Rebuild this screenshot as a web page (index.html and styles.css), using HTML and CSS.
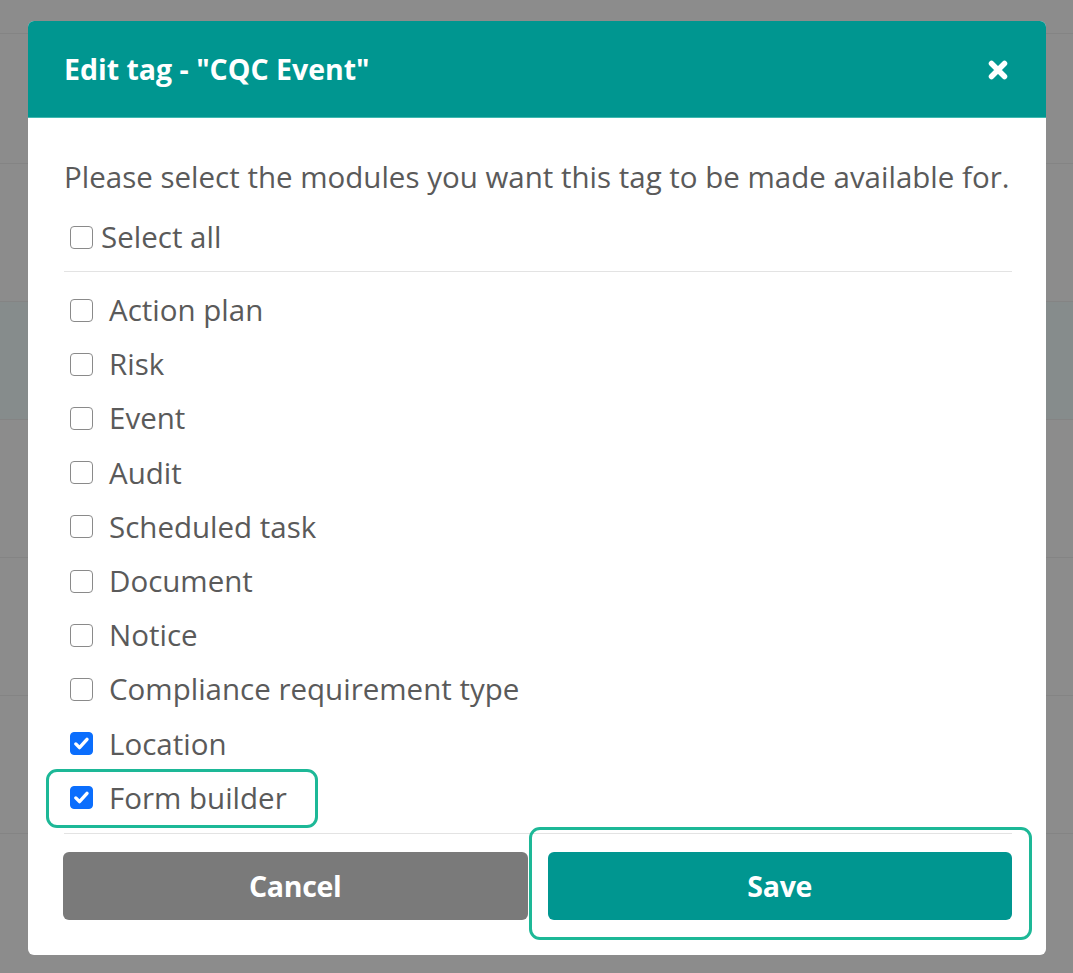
FILE: index.html
```html
<!DOCTYPE html>
<html>
<head>
<meta charset="utf-8">
<link rel="stylesheet" href="styles.css">
</head>
<body>
<div class="backdrop">
  <div class="bg-line l1"></div>
  <div class="bg-line l2"></div>
  <div class="bg-band"></div>
  <div class="bg-line l3"></div>
  <div class="bg-line l4"></div>
  <div class="bg-line l5"></div>
  <div class="modal">
    <div class="modal-header">
      <h2 class="modal-title">Edit tag - "CQC Event"</h2>
      <span class="close">
        <svg width="22" height="20" viewBox="0 0 22 20"><path d="M4.5 3.5 L17.5 16.5 M17.5 3.5 L4.5 16.5" stroke="#fff" stroke-width="5.5" stroke-linecap="round"/></svg>
      </span>
    </div>
    <div class="modal-body">
      <p class="intro">Please select the modules you want this tag to be made available for.</p>
      <div class="select-all"><span class="cb"></span><span class="lbl">Select all</span></div>
      <div class="sep"></div>
      <div class="list">
        <div class="row"><span class="cb"></span><span class="lbl">Action plan</span></div>
        <div class="row"><span class="cb"></span><span class="lbl">Risk</span></div>
        <div class="row"><span class="cb"></span><span class="lbl">Event</span></div>
        <div class="row"><span class="cb"></span><span class="lbl">Audit</span></div>
        <div class="row"><span class="cb"></span><span class="lbl">Scheduled task</span></div>
        <div class="row"><span class="cb"></span><span class="lbl">Document</span></div>
        <div class="row"><span class="cb"></span><span class="lbl">Notice</span></div>
        <div class="row"><span class="cb"></span><span class="lbl">Compliance requirement type</span></div>
        <div class="row"><span class="cb checked"><svg width="19" height="19" viewBox="0 0 18 18"><path d="M3.6 9.4 L7.1 12.9 L14.2 5" fill="none" stroke="#fff" stroke-width="3.2" stroke-linecap="round" stroke-linejoin="round"/></svg></span><span class="lbl">Location</span></div>
        <div class="row hl-row"><span class="cb checked"><svg width="19" height="19" viewBox="0 0 18 18"><path d="M3.6 9.4 L7.1 12.9 L14.2 5" fill="none" stroke="#fff" stroke-width="3.2" stroke-linecap="round" stroke-linejoin="round"/></svg></span><span class="lbl">Form builder</span><span class="hl hl-form"></span></div>
      </div>
      <div class="sep sep-bottom"></div>
      <div class="actions">
        <button class="btn btn-cancel">Cancel</button>
        <button class="btn btn-save">Save<span class="hl hl-save"></span></button>
      </div>
    </div>
  </div>
</div>
</body>
</html>
```
FILE: styles.css
```css
* { box-sizing: border-box; }
html, body { margin: 0; padding: 0; }
body {
  background: #8c8c8c;
  font-family: "Open Sans", "Noto Sans", sans-serif;
  width: 1073px;
  height: 973px;
  overflow: hidden;
}
.backdrop {
  position: relative;
  width: 1073px;
  height: 973px;
  padding-top: 21px;
  padding-left: 28px;
}
.bg-line {
  position: absolute;
  left: 0;
  right: 0;
  height: 1px;
  background: #848484;
}
.l1 { top: 33px; }
.l2 { top: 163px; }
.l3 { top: 557px; }
.l4 { top: 695px; }
.l5 { top: 833px; }
.bg-band {
  position: absolute;
  left: 0;
  right: 0;
  top: 301px;
  height: 119px;
  background: #868c8c;
  border-top: 1px solid #848484;
  border-bottom: 1px solid #848484;
}
.modal {
  position: relative;
  width: 1018px;
  height: 934px;
  background: #fff;
  border-radius: 6px;
}
.modal-header {
  height: 97px;
  background: #009690;
  border-radius: 6px 6px 0 0;
  border-bottom: 1px solid #3fb8b0;
  display: flex;
  align-items: center;
  justify-content: space-between;
  padding: 0 37px 0 36px;
}
.modal-title {
  margin: 0;
  color: #fff;
  font-size: 28.5px;
  font-weight: 700;
  letter-spacing: 0;
}
.close {
  display: flex;
  margin-top: 2px;
}
.modal-body {
  padding: 41px 34px 0 36px;
}
.intro {
  margin: 0;
  font-size: 29.5px;
  line-height: 36px;
  color: #5a5a5a;
  white-space: nowrap;
}
.select-all {
  display: flex;
  align-items: center;
  height: 40px;
  margin-top: 22px;
  padding-left: 6px;
}
.select-all .lbl { margin-left: 8px; }
.cb {
  width: 23px;
  height: 23px;
  border: 1.5px solid #8a8a8a;
  border-radius: 4px;
  background: #fff;
  flex: none;
  display: flex;
  align-items: center;
  justify-content: center;
}
.cb.checked {
  background: #0b6efd;
  border-color: #0b6efd;
}
.lbl {
  font-size: 29.5px;
  color: #5a5a5a;
  line-height: 36px;
  white-space: nowrap;
}
.sep {
  height: 1px;
  background: #e3e3e3;
  margin-top: 14px;
}
.list {
  margin-top: 11px;
}
.row {
  position: relative;
  display: flex;
  align-items: center;
  height: 54.2px;
  padding-left: 6px;
}
.row .lbl { margin-left: 16px; }
.sep-bottom { margin-top: 8px; }
.actions {
  display: flex;
  gap: 20px;
  margin-top: 18px;
  margin-left: -1px;
}
.btn {
  position: relative;
  flex: 1;
  height: 68px;
  border: none;
  border-radius: 6px;
  color: #fff;
  font-family: "Open Sans", "Noto Sans", sans-serif;
  font-size: 28.5px;
  font-weight: 700;
  letter-spacing: -0.3px;
  padding: 0;
}
.btn-cancel { background: #7a7a7a; }
.btn-save { background: #009690; }
.hl {
  position: absolute;
  border: 3px solid #1db897;
  border-radius: 11px;
  pointer-events: none;
}
.hl-form {
  left: -18px;
  top: -2px;
  width: 272px;
  height: 59px;
}
.hl-save {
  left: -19px;
  top: -25px;
  width: 503px;
  height: 113px;
}
```
